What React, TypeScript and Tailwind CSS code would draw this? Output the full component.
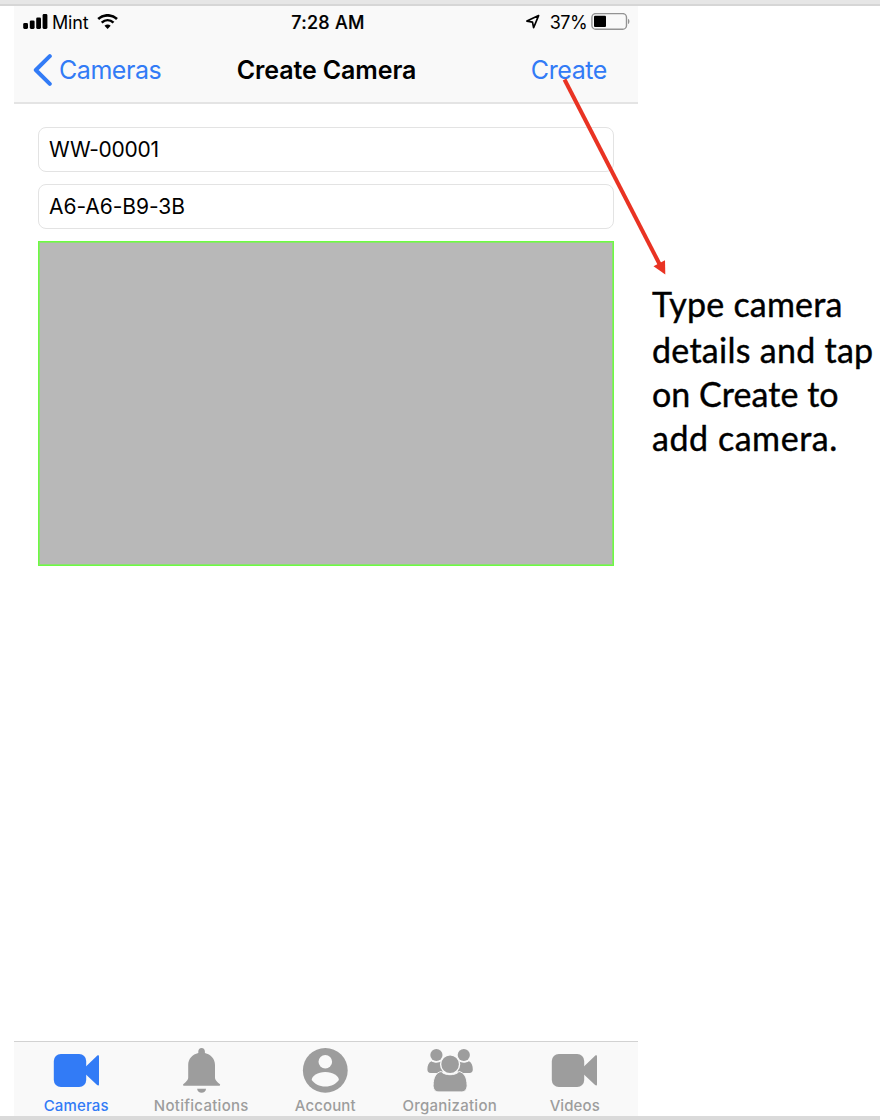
function SignalIcon() {
  return (
    <svg width="26" height="16" viewBox="0 0 26 16" className="ml-[9px] shrink-0" fill="#000">
      <rect x="0.2" y="9.1" width="4.8" height="5.8" rx="1.3" />
      <rect x="6.8" y="6.4" width="4.8" height="8.5" rx="1.3" />
      <rect x="13.2" y="3.4" width="4.8" height="11.5" rx="1.3" />
      <rect x="19.6" y="0.1" width="4.8" height="14.8" rx="1.3" />
    </svg>
  );
}

function WifiIcon() {
  return (
    <svg width="22" height="16" viewBox="0 0 22 16" className="shrink-0" fill="none" stroke="#000">
      <path d="M1.2 4.9C6.6 0.1 14.6 0.1 20 4.9" strokeWidth="2.7" />
      <path d="M4.7 8.6C8.2 5.5 13 5.5 16.5 8.6" strokeWidth="2.6" />
      <path d="M10.6 14.9L7.5 11.8C9.3 10.2 11.9 10.2 13.7 11.8Z" fill="#000" stroke="none" />
    </svg>
  );
}

function LocationIcon() {
  return (
    <svg width="16" height="16" viewBox="0 0 16 16" className="shrink-0" fill="none" stroke="#000" strokeWidth="1.7" strokeLinejoin="round">
      <path d="M13.6 1.6L1.9 7.1L7.5 8.1L8.6 13.7Z" />
    </svg>
  );
}

function BatteryIcon() {
  return (
    <svg width="40" height="18" viewBox="0 0 40 18" className="shrink-0">
      <rect x="0.9" y="0.6" width="34.6" height="15.6" rx="3.8" fill="none" stroke="#939393" strokeWidth="1.4" />
      <rect x="3" y="2.8" width="12" height="11.2" rx="1" fill="#000" />
      <path d="M37 5.7C38.9 6.4 38.9 10.4 37 11.1Z" fill="#939393" />
    </svg>
  );
}

function VideoIcon() {
  return (
    <svg width="46" height="46" viewBox="0 0 46 46" fill="currentColor">
      <rect x="0.8" y="6" width="32.4" height="33" rx="7" />
      <path d="M32.9 18.6L44.1 7.8C45.1 6.9 46 7.3 46 8.5V36.3C46 37.6 45.1 38 44.1 37.1L32.9 26.4Z" />
    </svg>
  );
}

function BellIcon() {
  return (
    <svg width="46" height="46" viewBox="0 0 46 46" fill="currentColor">
      <path d="M23.6 0C25.7 0 26.9 1.6 26.9 3.6V5.1C32.7 6.5 37 11 37 17V29.2C37 31.5 37.9 32.8 41.7 36.1C42.5 36.9 42.2 37.8 41.3 37.8H5.9C5 37.8 4.7 36.9 5.5 36.1C9.3 32.8 10.2 31.5 10.2 29.2V17C10.2 11 14.5 6.5 20.3 5.1V3.6C20.3 1.6 21.5 0 23.6 0Z" />
      <path d="M19.1 40.7H28.1C27.8 43.3 26 44.8 23.6 44.8C21.2 44.8 19.4 43.3 19.1 40.7Z" />
    </svg>
  );
}

function AccountIcon() {
  return (
    <svg width="46" height="46" viewBox="0 0 46 46">
      <circle cx="23.3" cy="22.4" r="22.4" fill="currentColor" />
      <circle cx="23.3" cy="13.7" r="6.8" fill="#f9f9f9" />
      <path d="M9.7 32C9.7 28 15.7 24 23.3 24C30.9 24 36.9 28 36.9 32C34.3 35.8 29.3 38.5 23.3 38.5C17.3 38.5 12.3 35.8 9.7 32Z" fill="#f9f9f9" />
    </svg>
  );
}

function GroupIcon() {
  return (
    <svg width="46" height="46" viewBox="0 0 46 46" fill="currentColor">
      <circle cx="9.4" cy="7" r="6.1" />
      <circle cx="36.8" cy="7" r="6.1" />
      <path d="M4.4 13.2C7.2 15.2 11.7 15 14.2 13.6L16.2 20L15.2 25H3.7C1.5 25 0.4 23.8 0.4 21.5C0.4 17.8 1.5 14.5 4.4 13.2Z" />
      <path d="M41.8 13.2C39 15.2 34.5 15 32 13.6L30 20L31 25H42.5C44.7 25 45.8 23.8 45.8 21.5C45.8 17.8 44.7 14.5 42 13.2Z" />
      <path d="M14.2 23.5C17.7 27.8 28.5 27.8 32 23.5C37.2 24.5 40.1 29.5 40.1 37.5C40.1 41.4 37.9 43.9 34.3 43.9H11.9C8.3 43.9 6.1 41.4 6.1 37.5C6.1 29.5 9 24.5 14.2 23.5Z" stroke="#f9f9f9" strokeWidth="1" />
      <circle cx="23.1" cy="16.2" r="9.5" stroke="#f9f9f9" strokeWidth="1.4" />
    </svg>
  );
}

const tabs = [
  { label: "Cameras", icon: <VideoIcon />, color: "text-[#327bf6]", tracking: "tracking-[0.15px]" },
  { label: "Notifications", icon: <BellIcon />, color: "text-[#9d9d9d]", tracking: "tracking-[0.28px] pl-px" },
  { label: "Account", icon: <AccountIcon />, color: "text-[#9d9d9d]", tracking: "tracking-[0.12px]" },
  { label: "Organization", icon: <GroupIcon />, color: "text-[#9d9d9d]", tracking: "tracking-[0.25px]" },
  { label: "Videos", icon: <VideoIcon />, color: "text-[#9d9d9d]", tracking: "tracking-[0.1px] pl-px" },
];

function Field({ value, tracking }: { value: string; tracking: string }) {
  return (
    <div className="flex h-[45px] items-center rounded-lg border border-[#e3e3e3] bg-white pb-px pl-[10px] text-[21px] leading-none">
      <span className={tracking}>{value}</span>
    </div>
  );
}

export default function App() {
  return (
    <div className="relative flex h-[1120px] w-[880px] flex-col overflow-hidden bg-white font-['Inter',sans-serif] text-black">
      <div className="h-1.5 shrink-0 border-b-2 border-[#d6d6d6] bg-[#e6e6e6]" />
      <div className="flex min-h-0 flex-1 pl-[14px]">
        <main className="flex w-[624px] shrink-0 flex-col">
          <header className="flex h-[98px] shrink-0 flex-col border-b-2 border-[#e4e4e4] bg-[#f9f9f9]">
            <div className="grid h-[32px] grid-cols-[1fr_auto_1fr] items-center text-lg leading-none">
              <div className="flex items-center">
                <SignalIcon />
                <span className="mr-[9px] ml-[3px] pt-[2px] tracking-[-0.2px]">Mint</span>
                <WifiIcon />
              </div>
              <span className="pt-[2px] pl-[4px] font-medium tracking-[0.3px] [-webkit-text-stroke:0.2px_#000]">7:28 AM</span>
              <div className="flex items-center justify-end pr-[7px]">
                <LocationIcon />
                <span className="mr-1 ml-[9px] pt-[2px] tracking-[-0.6px]">37%</span>
                <BatteryIcon />
              </div>
            </div>
            <nav className="grid h-[64px] grid-cols-[1fr_auto_1fr] items-center text-[25px] leading-none">
              <div className="flex items-center pl-[19px] text-[#327bf6]">
                <svg width="20" height="32" viewBox="0 0 20 32" fill="none" stroke="currentColor" strokeWidth="4" strokeLinecap="round" strokeLinejoin="round">
                  <path d="M16.8 2.2L2.8 16L16.8 29.8" />
                </svg>
                <span className="ml-[6px] tracking-[-0.45px]">Cameras</span>
              </div>
              <span className="pl-px font-semibold tracking-[-0.1px]">Create Camera</span>
              <div className="flex justify-end pr-[31px] text-[#327bf6]">
                <span className="tracking-[-0.4px]">Create</span>
              </div>
            </nav>
          </header>
          <section className="flex flex-1 flex-col px-6 pt-[23px]">
            <div className="flex flex-col gap-3">
              <Field value="WW-00001" tracking="tracking-[-0.3px]" />
              <Field value="A6-A6-B9-3B" tracking="tracking-[-0.05px]" />
              <div className="h-[325px] border border-[#6dfb42] bg-[#b8b8b8] shadow-[inset_0_0_0_1px_#8be070]" />
            </div>
          </section>
          <footer className="grid h-[75px] shrink-0 grid-cols-5 border-t border-[#d2d2d2] bg-[#f9f9f9] pr-[1.5px]">
            {tabs.map((tab) => (
              <div key={tab.label} className={`flex flex-col items-center pt-[6px] ${tab.color}`}>
                {tab.icon}
                <span className={`mt-[3px] text-[15px] leading-[18px] font-medium ${tab.tracking}`}>{tab.label}</span>
              </div>
            ))}
          </footer>
        </main>
        <aside className="pt-[276px] pl-[14px] font-['Lato',sans-serif] text-[34px] leading-[44px] whitespace-nowrap [-webkit-text-stroke:0.4px_#000]">
          <p className="mb-0.5 tracking-[0.2px]">Type camera</p>
          <p className="tracking-[0.27px]">details and tap</p>
          <p className="tracking-[0.05px]">on Create to</p>
          <p className="tracking-[0.55px]">add camera.</p>
        </aside>
      </div>
      <div className="h-1 shrink-0 bg-[#dadada]" />
      <svg width="120" height="210" viewBox="0 0 120 210" className="absolute top-[75px] left-[555px]">
        <path d="M9.5 4.5L105 190" stroke="#e93323" strokeWidth="4" />
        <path d="M110.3 199.5L98.5 191.3L110 185.3Z" fill="#e93323" />
      </svg>
    </div>
  );
}
